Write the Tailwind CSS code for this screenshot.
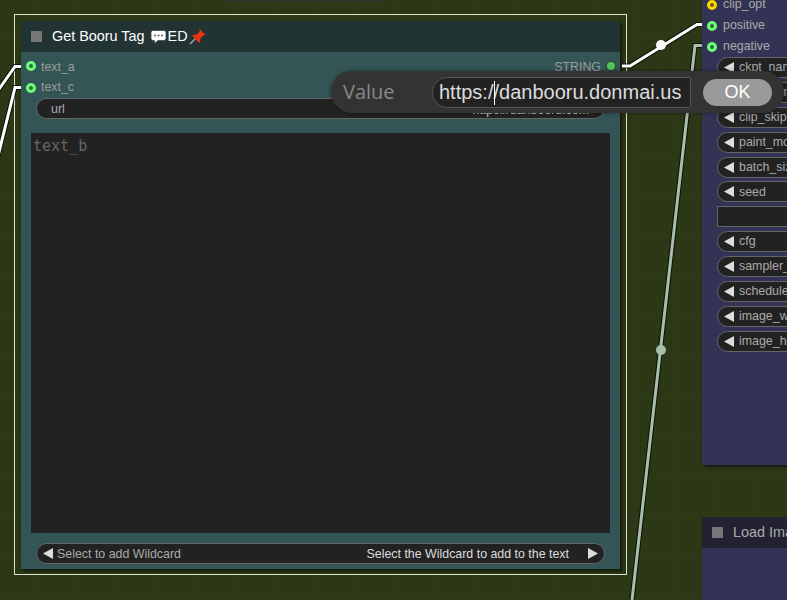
<!DOCTYPE html>
<html lang="en">
<head>
    <meta charset="UTF-8">
    <title>Get Booru Tag</title>
    <script src="https://cdn.jsdelivr.net/npm/@tailwindcss/browser@4"></script>
</head>
<body class="bg-[#2d3817]">
    <!-- canvas, everything in here sits on free coordinates -->
    <div class="relative w-[787px] h-[600px] overflow-hidden font-['Liberation_Sans',sans-serif] bg-[#2d3817] bg-[linear-gradient(#28321480_1px,transparent_1px),linear-gradient(90deg,#28321480_1px,transparent_1px)] bg-size-[10px_10px]">

        <!-- node cut off at the top -->
        <div class="absolute left-[225px] top-[-20px] w-[160px] h-[21px] bg-[#353535]"></div>

        <!-- selection outline -->
        <div class="absolute left-[14px] top-[14px] w-[613px] h-[561px] border border-[#d8e0d0]"></div>

        <!-- Get Booru Tag node -->
        <div class="absolute left-[21px] top-[21px] w-[599px] h-[548px] flex flex-col bg-[#335555] shadow-[2px_2px_3px_#0000008c]">
            <div class="h-[31px] shrink-0 flex items-center pl-[10px] bg-[#223333] text-white text-[14.4px]">
                <span class="w-[11px] h-[11px] bg-[#777]"></span>
                <span class="ml-[10px]">Get Booru Tag</span>
                <svg class="ml-[5px]" width="17" height="16" viewBox="0 0 17 16">
                    <path d="M3 1.500h11a2 2 0 0 1 2 2v6a2 2 0 0 1-2 2H8l-3.500 3v-3H3a2 2 0 0 1-2-2v-6a2 2 0 0 1 2-2z" fill="#fff" stroke="#444" stroke-width="0.800"/>
                    <circle cx="5" cy="6.500" r="1" fill="#555"/><circle cx="8.500" cy="6.500" r="1" fill="#555"/><circle cx="12" cy="6.500" r="1" fill="#555"/>
                </svg>
                <span class="ml-[1px]">ED</span>
                <svg class="ml-[1px]" width="17" height="17" viewBox="0 0 16 16">
                    <path d="M6 10L1 15" stroke="#aaa" stroke-width="1.300"/>
                    <path d="M9.500 .5l6 6-1.900.3-2.800 2.800-.2 3.300-1.100.9-6.300-6.300.9-1.100 3.300-.2 2.800-2.800z" fill="#e8340f"/>
                </svg>
            </div>
            <div class="relative flex-1 flex flex-col">
                <div class="h-[21px] mt-[4px] flex items-center justify-between pl-[5px] pr-[4px] text-[12.4px] text-[#9c9c9c]">
                    <div class="flex items-center">
                        <span class="w-[10px] h-[10px] rounded-full border-[3px] border-[#6cff75] bg-[#2f6b40]"></span>
                        <span class="ml-[5px] pt-[1px]">text_a</span>
                    </div>
                    <div class="flex items-center">
                        <span class="pt-[1px]">STRING</span>
                        <span class="ml-[5px] w-[10px] h-[10px] rounded-full bg-[#58c25e] border border-black/60"></span>
                    </div>
                </div>
                <div class="h-[21px] flex items-center pl-[5px] text-[12.4px] text-[#9c9c9c]">
                    <span class="w-[10px] h-[10px] rounded-full border-[3px] border-[#6cff75] bg-[#2f6b40]"></span>
                    <span class="ml-[5px]">text_c</span>
                </div>
                <div class="mx-[15px] h-[21px] shrink-0 flex items-center justify-between pl-[14px] pr-[15px] rounded-full bg-[#222] border border-[#666] text-[12.4px] text-[#ccc]">
                    <span class="pt-[1px] text-[#aaa]">url</span>
                    <span class="pt-[4px]">https://danbooru.com</span>
                </div>
                <div class="mx-[10px] mt-[14px] flex-1 bg-[#222] px-[2px] pt-[2px] font-['DejaVu_Sans_Mono',monospace] text-[15px] text-[#666]">text_b</div>
                <div class="mx-[15px] mt-[10px] mb-[5px] h-[21px] shrink-0 flex items-center justify-between px-[6px] rounded-full bg-[#222] border border-[#666] text-[12.4px]">
                    <div class="flex items-center text-[#aaa]">
                        <svg width="10" height="11" viewBox="0 0 10 11"><path d="M0 5.500l10-5.500v11z" fill="#ddd"/></svg>
                        <span class="ml-[4px] pt-[1px]">Select to add Wildcard</span>
                    </div>
                    <div class="flex items-center text-[#ddd]">
                        <span class="pt-[1px]">Select the Wildcard to add to the text</span>
                        <svg class="ml-[19px]" width="10" height="11" viewBox="0 0 10 11"><path d="M10 5.500L0 0v11z" fill="#ddd"/></svg>
                    </div>
                </div>
            </div>
        </div>

        <!-- loader node on the right -->
        <div class="absolute left-[702px] top-[-30px] w-[120px] h-[495px] bg-[#333355] shadow-[2px_2px_3px_#0000008c] text-[12.4px] text-[#aaa]">
            <div class="absolute left-[5px] top-[24px] flex flex-col">
                <div class="h-[21px] flex items-center">
                    <span class="w-[10px] h-[10px] rounded-full border-[3px] border-[#ffd500] bg-[#6b5a10]"></span>
                    <span class="ml-[6px]">clip_opt</span>
                </div>
                <div class="h-[21px] flex items-center">
                    <span class="w-[10px] h-[10px] rounded-full border-[3px] border-[#6cff75] bg-[#2f6b40]"></span>
                    <span class="ml-[6px]">positive</span>
                </div>
                <div class="h-[21px] flex items-center">
                    <span class="w-[10px] h-[10px] rounded-full border-[3px] border-[#6cff75] bg-[#2f6b40]"></span>
                    <span class="ml-[6px]">negative</span>
                </div>
            </div>
            <div class="absolute left-[15px] top-[87px] w-[120px] flex flex-col gap-[3.88px]">
                <div class="h-[21px] flex items-center pl-[6px] rounded-l-full bg-[#222] border border-[#666]"><svg class="shrink-0" width="10" height="11" viewBox="0 0 10 11"><path d="M0 5.500l10-5.500v11z" fill="#ddd"/></svg><span class="ml-[5px] whitespace-nowrap">ckpt_name</span></div>
                <div class="h-[21px] flex items-center pl-[6px] rounded-l-full bg-[#222] border border-[#666]"><svg class="shrink-0" width="10" height="11" viewBox="0 0 10 11"><path d="M0 5.500l10-5.500v11z" fill="#ddd"/></svg><span class="ml-[5px] whitespace-nowrap">vae_name</span></div>
                <div class="h-[21px] flex items-center pl-[6px] rounded-l-full bg-[#222] border border-[#666]"><svg class="shrink-0" width="10" height="11" viewBox="0 0 10 11"><path d="M0 5.500l10-5.500v11z" fill="#ddd"/></svg><span class="ml-[5px] whitespace-nowrap">clip_skip</span></div>
                <div class="h-[21px] flex items-center pl-[6px] rounded-l-full bg-[#222] border border-[#666]"><svg class="shrink-0" width="10" height="11" viewBox="0 0 10 11"><path d="M0 5.500l10-5.500v11z" fill="#ddd"/></svg><span class="ml-[5px] whitespace-nowrap">paint_mode</span></div>
                <div class="h-[21px] flex items-center pl-[6px] rounded-l-full bg-[#222] border border-[#666]"><svg class="shrink-0" width="10" height="11" viewBox="0 0 10 11"><path d="M0 5.500l10-5.500v11z" fill="#ddd"/></svg><span class="ml-[5px] whitespace-nowrap">batch_size</span></div>
                <div class="h-[21px] flex items-center pl-[6px] rounded-l-full bg-[#222] border border-[#666]"><svg class="shrink-0" width="10" height="11" viewBox="0 0 10 11"><path d="M0 5.500l10-5.500v11z" fill="#ddd"/></svg><span class="ml-[5px] whitespace-nowrap">seed</span></div>
                <div class="h-[21px] bg-[#222] border border-[#666]"></div>
                <div class="h-[21px] flex items-center pl-[6px] rounded-l-full bg-[#222] border border-[#666]"><svg class="shrink-0" width="10" height="11" viewBox="0 0 10 11"><path d="M0 5.500l10-5.500v11z" fill="#ddd"/></svg><span class="ml-[5px] whitespace-nowrap">cfg</span></div>
                <div class="h-[21px] flex items-center pl-[6px] rounded-l-full bg-[#222] border border-[#666]"><svg class="shrink-0" width="10" height="11" viewBox="0 0 10 11"><path d="M0 5.500l10-5.500v11z" fill="#ddd"/></svg><span class="ml-[5px] whitespace-nowrap">sampler_name</span></div>
                <div class="h-[21px] flex items-center pl-[6px] rounded-l-full bg-[#222] border border-[#666]"><svg class="shrink-0" width="10" height="11" viewBox="0 0 10 11"><path d="M0 5.500l10-5.500v11z" fill="#ddd"/></svg><span class="ml-[5px] whitespace-nowrap">scheduler</span></div>
                <div class="h-[21px] flex items-center pl-[6px] rounded-l-full bg-[#222] border border-[#666]"><svg class="shrink-0" width="10" height="11" viewBox="0 0 10 11"><path d="M0 5.500l10-5.500v11z" fill="#ddd"/></svg><span class="ml-[5px] whitespace-nowrap">image_width</span></div>
                <div class="h-[21px] flex items-center pl-[6px] rounded-l-full bg-[#222] border border-[#666]"><svg class="shrink-0" width="10" height="11" viewBox="0 0 10 11"><path d="M0 5.500l10-5.500v11z" fill="#ddd"/></svg><span class="ml-[5px] whitespace-nowrap">image_height</span></div>
            </div>
        </div>

        <!-- Load Image node -->
        <div class="absolute left-[702px] top-[517px] w-[120px] h-[120px] bg-[#333355] text-[14.4px] text-[#aaa]">
            <div class="h-[31px] flex items-center pl-[10px] bg-[#222233]">
                <span class="w-[11px] h-[11px] shrink-0 bg-[#777]"></span>
                <span class="ml-[10px] whitespace-nowrap">Load Image</span>
            </div>
        </div>

        <!-- wires -->
        <svg class="absolute left-0 top-0" width="787" height="600" fill="none">
            <path d="M21 66.500H15L-3 92M21 87.500H15L-3 160M622 66H630L697 24.500H702" stroke="#000" stroke-opacity="0.700" stroke-width="5"/>
            <path d="M21 66.500H15L-3 92M21 87.500H15L-3 160M622 66H630L697 24.500H702" stroke="#fff" stroke-width="3"/>
            <circle cx="661" cy="45" r="5" fill="#fff"/>
            <path d="M702 45.500H695L632 600" stroke="#000" stroke-opacity="0.700" stroke-width="5"/>
            <path d="M702 45.500H695L632 600" stroke="#a8bfae" stroke-width="3"/>
            <circle cx="661" cy="350" r="5" fill="#a8bfae"/>
        </svg>

        <!-- value prompt -->
        <div class="absolute left-[331px] top-[71px] w-[453px] h-[42px] flex items-center rounded-full bg-[#333] shadow-[0_0_4px_#0006]">
            <span class="ml-[12px] w-[89px] font-['Open_Sans',sans-serif] text-[20px] text-[#888]">Value</span>
            <div class="relative w-[259px] h-[31px] flex items-center pl-[6px] rounded-l-[15px] rounded-r-[2px] bg-[#222] border border-[#555] text-[20px] text-[#ddd] whitespace-nowrap">
                https://danbooru.donmai.us
                <span class="absolute left-[61px] top-[3px] w-[1px] h-[24px] bg-white"></span>
            </div>
            <span class="ml-[12px] w-[69px] h-[27px] flex items-center justify-center rounded-full bg-[#999] text-[18px] text-white">OK</span>
        </div>
    </div>
</body>
</html>
